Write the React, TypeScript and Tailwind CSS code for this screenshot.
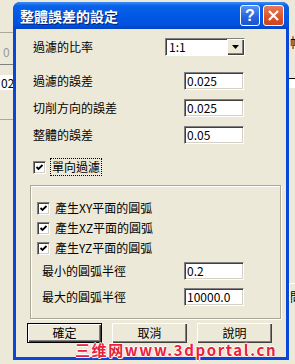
const cjk = "font-['Noto_Sans_CJK_TC','Noto_Sans_CJK_SC',sans-serif]";

function CheckBox() {
  return (
    <span className="w-[13px] h-[13px] shrink-0 bg-white border border-t-[#808080] border-l-[#808080] border-b-white border-r-white shadow-[inset_1px_1px_0_#404040,inset_-1px_-1px_0_#d4d0c8] flex items-center justify-center">
      <svg width="9" height="9" viewBox="0 0 9 9">
        <path d="M1.5 4 L3.5 6 L7.5 2" fill="none" stroke="#000" strokeWidth="1.8" />
      </svg>
    </span>
  );
}

function Field({ value, w = "w-[60px]" }: { value: string; w?: string }) {
  return (
    <div
      className={`${w} h-[18px] bg-white border border-t-[#808080] border-l-[#808080] border-b-white border-r-white shadow-[inset_1px_1px_0_#404040,inset_-1px_-1px_0_#d4d0c8] pl-[2px] text-[12px] leading-[16px] text-black ${cjk}`}
    >
      {value}
    </div>
  );
}

function Btn({ label, isDefault }: { label: string; isDefault?: boolean }) {
  return (
    <div
      className={`w-[75px] h-[20px] flex items-center justify-center bg-[#ece9d8] text-[12px] leading-none text-black ${cjk} ${
        isDefault
          ? "border border-black shadow-[inset_1px_1px_0_#fff,inset_-1px_-1px_0_#404040,inset_-2px_-2px_0_#808080]"
          : "shadow-[inset_1px_1px_0_#fff,inset_-1px_-1px_0_#404040,inset_-2px_-2px_0_#808080]"
      }`}
    >
      {label}
    </div>
  );
}

function Row({ label, value }: { label: string; value: string }) {
  return (
    <div className="flex items-center h-[18px]">
      <span className={`w-[151px] text-[12px] leading-none text-black ${cjk}`}>{label}</span>
      <Field value={value} />
    </div>
  );
}

function CheckRow({ label }: { label: string }) {
  return (
    <div className="flex items-center h-[20px] gap-[5px]">
      <CheckBox />
      <span className={`text-[12px] leading-none text-black ${cjk}`}>{label}</span>
    </div>
  );
}

export default function App() {
  return (
    <div className="w-[295px] h-[364px] bg-[#ece9d8] flex overflow-hidden">
      {/* window behind, left edge */}
      <div className="w-[13px] shrink-0 flex flex-col">
        <div className="mt-[32px] h-[1px] bg-[#aca899]" />
        <div className={`mt-[10px] h-[18px] text-[12px] leading-[18px] pl-[3px] text-[#9a9a9a] ${cjk}`}>0</div>
        <div className="mt-[3px] h-[1px] bg-[#808080]" />
        <div className={`mt-[10px] h-[15px] bg-white text-[12px] leading-[15px] pl-[1px] text-black ${cjk}`}>02</div>
        <div className="mt-[29px] h-[1px] bg-[#aca899]" />
      </div>

      {/* dialog */}
      <div className="w-[276px] shrink-0 mt-[2px] h-[358px] flex flex-col rounded-t-[7px] bg-[#0a46d8]">
        <div className="h-[27px] shrink-0 flex items-center pl-[7px] pr-[5px] rounded-t-[7px] bg-[linear-gradient(to_bottom,#3d8ef6_0%,#0a62e8_14%,#0058e6_50%,#0052df_85%,#0044c4_100%)]">
          <span className={`flex-1 text-[14px] font-bold leading-none text-white [text-shadow:1px_1px_0_#0a1e70] ${cjk}`}>
            整體誤差的設定
          </span>
          <div className="w-[20px] h-[21px] rounded-[3px] border border-white bg-[linear-gradient(to_bottom,#5a94f4,#2561e0_60%,#1e55d0)] flex items-center justify-center text-white font-bold text-[16px] leading-none font-['Liberation_Sans',sans-serif]">
            ?
          </div>
          <div className="ml-[3px] w-[21px] h-[21px] rounded-[3px] border border-white bg-[linear-gradient(to_bottom,#e87a5a,#d9542a_60%,#c94420)] flex items-center justify-center">
            <svg width="13" height="13" viewBox="0 0 13 13">
              <path d="M2 2 L11 11 M11 2 L2 11" stroke="#fff" strokeWidth="2.2" />
            </svg>
          </div>
        </div>

        <div className="flex-1 mx-[3px] mb-[3px] bg-[#ece9d8] flex flex-col pl-[17px]">
          <div className="mt-[9px] flex items-center h-[18px]">
            <span className={`w-[132px] text-[12px] leading-none text-black ${cjk}`}>過濾的比率</span>
            <div className="w-[80px] h-[18px] bg-white border border-t-[#808080] border-l-[#808080] border-b-white border-r-white shadow-[inset_1px_1px_0_#404040] flex items-center">
              <span className={`flex-1 pl-[3px] text-[12px] leading-none text-black ${cjk}`}>1:1</span>
              <div className="w-[17px] h-[16px] bg-[#ece9d8] shadow-[inset_1px_1px_0_#fff,inset_-1px_-1px_0_#404040,inset_-2px_-2px_0_#808080] flex items-center justify-center">
                <svg width="7" height="4" viewBox="0 0 7 4">
                  <path d="M0 0 H7 L3.5 4 Z" fill="#000" />
                </svg>
              </div>
            </div>
          </div>

          <div className="mt-[16px] flex flex-col gap-[9px]">
            <Row label="過濾的誤差" value="0.025" />
            <Row label="切削方向的誤差" value="0.025" />
            <Row label="整體的誤差" value="0.05" />
          </div>

          <div className="mt-[14px] flex items-center gap-[4px] h-[18px]">
            <CheckBox />
            <span className={`px-[1px] py-[2px] border border-dotted border-black text-[12px] leading-none text-black ${cjk}`}>
              單向過濾
            </span>
          </div>

          <div className="mt-[9px] ml-[-3px] w-[251px] h-[134px] border border-[#aca899] shadow-[1px_1px_0_#fff,inset_1px_1px_0_#fff] flex flex-col pl-[6px] pt-[12px]">
            <CheckRow label="產生XY平面的圓弧" />
            <CheckRow label="產生XZ平面的圓弧" />
            <CheckRow label="產生YZ平面的圓弧" />
            <div className="mt-[4px] flex flex-col gap-[8px] pl-[5px]">
              <div className="flex items-center h-[18px]">
                <span className={`w-[142px] text-[12px] leading-none text-black ${cjk}`}>最小的圓弧半徑</span>
                <Field value="0.2" />
              </div>
              <div className="flex items-center h-[18px]">
                <span className={`w-[142px] text-[12px] leading-none text-black ${cjk}`}>最大的圓弧半徑</span>
                <Field value="10000.0" />
              </div>
            </div>
          </div>

          <div className="mt-[4px] ml-[-6px] flex gap-[10px]">
            <Btn label="確定" isDefault />
            <Btn label="取消" />
            <Btn label="說明" />
          </div>

          <div className="ml-[42px] h-[13px] flex items-center overflow-visible">
            <span
              className={`text-[15px] font-bold leading-[13px] text-[#e8223a] tracking-[1.6px] whitespace-nowrap [text-shadow:1px_0_0_#fff,-1px_0_0_#fff,0_1px_0_#fff,0_-1px_0_#fff,1px_1px_0_#f7a8b4] ${cjk}`}
            >
              三维网www.3dportal.cn
            </span>
          </div>
        </div>
      </div>

      {/* window behind, right edge */}
      <div className="flex-1 flex flex-col">
        <span className={`mt-[35px] pl-[1px] text-[13px] leading-none text-black ${cjk}`}>帷</span>
        <div className="mt-[30px] h-[10px] w-[6px] bg-white border-t border-black" />
        <div className="mt-[195px] h-[18px] border border-white border-r-0 bg-[#ece9d8]">
          <span className={`text-[12px] leading-[16px] text-black ${cjk}`}>問</span>
        </div>
      </div>
    </div>
  );
}
